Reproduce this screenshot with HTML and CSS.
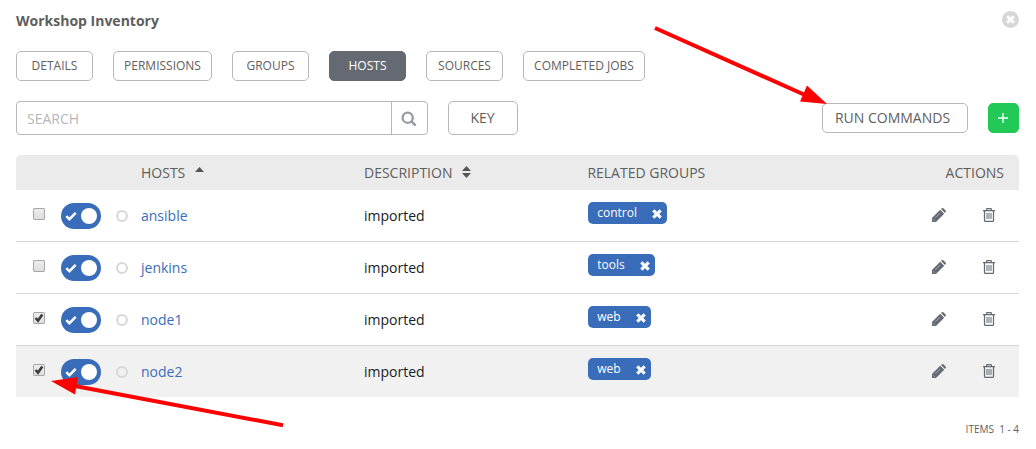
FILE: index.html
```html
<!DOCTYPE html>
<html lang="en">
<head>
<meta charset="utf-8">
<title>Workshop Inventory</title>
<link rel="stylesheet" href="styles.css">
</head>
<body>
<svg class="defs" aria-hidden="true">
  <symbol id="check" viewBox="0 0 12 10"><path d="M1.3 5.2 4.4 8.2 10.7 1.8" fill="none" stroke="#fff" stroke-width="2.5"/></symbol>
  <symbol id="times" viewBox="0 0 10 10"><path d="M1.3 1.3 8.7 8.7M8.7 1.3 1.3 8.7" fill="none" stroke="#fff" stroke-width="3.1"/></symbol>
  <symbol id="tick" viewBox="0 0 12 12"><path d="M2.6 6 5 8.7 9.3 2.5" fill="none" stroke="#3c3c3c" stroke-width="2.6"/></symbol>
  <symbol id="pencil" viewBox="0 0 14 14"><path d="M0 14V10L8.2 1.8 12.2 5.8 4 14ZM9 1 10 .3Q10.8-.3 11.6.4L13.6 2.4Q14.3 3.2 13.6 4L13 5Z" fill="#646972"/><path d="M1.2 11.2 2.8 12.8M3.2 10 8.2 5" fill="none" stroke="#fff" stroke-opacity=".5" stroke-width=".8"/></symbol>
  <symbol id="trash" viewBox="0 0 12 14"><path d="M0 2.5H12M3.5 2.5V1.5Q3.5.6 4.5.6H7.5Q8.5.6 8.5 1.5V2.5M1.5 3V12.4Q1.5 13.4 2.5 13.4H9.5Q10.5 13.4 10.5 12.4V3" fill="none" stroke="#646972" stroke-width="1.25"/><path d="M4 5V11M6 5V11M8 5V11" stroke="#646972" stroke-width="1"/></symbol>
</svg>
<main class="panel">
  <header class="title-bar">
    <h1 class="title">Workshop Inventory</h1>
    <span class="close"><svg width="9" height="9"><use href="#times"/></svg></span>
  </header>
  <nav class="tabs">
    <button class="btn tab">DETAILS</button>
    <button class="btn tab tab-permissions">PERMISSIONS</button>
    <button class="btn tab">GROUPS</button>
    <button class="btn tab active">HOSTS</button>
    <button class="btn tab">SOURCES</button>
    <button class="btn tab tab-jobs">COMPLETED JOBS</button>
  </nav>
  <div class="toolbar">
    <div class="search">
      <input class="search-input" placeholder="SEARCH">
      <span class="search-icon"><svg width="16" height="16" viewBox="0 0 16 16"><circle cx="6.7" cy="6.7" r="5.1" fill="none" stroke="#959aa3" stroke-width="2.3"/><path d="M10.4 10.4 14.6 14.6" stroke="#959aa3" stroke-width="2.6"/></svg></span>
    </div>
    <button class="btn key">KEY</button>
    <button class="btn run">RUN COMMANDS</button>
    <button class="btn add"><svg width="10" height="10"><path d="M5 0V10M0 5H10" stroke="#fff" stroke-width="1.3"/></svg></button>
  </div>
  <section class="table">
    <div class="row head">
      <span class="head-hosts">HOSTS<svg class="sort-up" width="9" height="5"><path d="M0 5 4.5 0 9 5Z" fill="#555"/></svg></span>
      <span class="head-desc">DESCRIPTION<svg class="sort" width="9" height="12"><path d="M0 5 4.5 0 9 5ZM0 7H9L4.5 12Z" fill="#555"/></svg></span>
      <span>RELATED GROUPS</span>
      <span class="head-actions">ACTIONS</span>
    </div>
    <div class="row">
      <span class="box"></span><span class="toggle"><svg width="12" height="10"><use href="#check"/></svg><i class="knob"></i></span><span class="status"></span>
      <a class="host">ansible</a><span class="desc">imported</span>
      <span class="tag">control<svg width="10" height="10"><use href="#times"/></svg></span>
      <span class="actions"><svg width="14" height="14"><use href="#pencil"/></svg><svg width="12" height="14"><use href="#trash"/></svg></span>
    </div>
    <div class="row">
      <span class="box"></span><span class="toggle"><svg width="12" height="10"><use href="#check"/></svg><i class="knob"></i></span><span class="status"></span>
      <a class="host">jenkins</a><span class="desc">imported</span>
      <span class="tag">tools<svg width="10" height="10"><use href="#times"/></svg></span>
      <span class="actions"><svg width="14" height="14"><use href="#pencil"/></svg><svg width="12" height="14"><use href="#trash"/></svg></span>
    </div>
    <div class="row">
      <span class="box"><svg width="12" height="12"><use href="#tick"/></svg></span><span class="toggle"><svg width="12" height="10"><use href="#check"/></svg><i class="knob"></i></span><span class="status"></span>
      <a class="host">node1</a><span class="desc">imported</span>
      <span class="tag">web<svg width="10" height="10"><use href="#times"/></svg></span>
      <span class="actions"><svg width="14" height="14"><use href="#pencil"/></svg><svg width="12" height="14"><use href="#trash"/></svg></span>
    </div>
    <div class="row hovered">
      <span class="box"><svg width="12" height="12"><use href="#tick"/></svg></span><span class="toggle"><svg width="12" height="10"><use href="#check"/></svg><i class="knob"></i></span><span class="status"></span>
      <a class="host">node2</a><span class="desc">imported</span>
      <span class="tag">web<svg width="10" height="10"><use href="#times"/></svg></span>
      <span class="actions"><svg width="14" height="14"><use href="#pencil"/></svg><svg width="12" height="14"><use href="#trash"/></svg></span>
    </div>
  </section>
  <footer class="pager">ITEMS&nbsp; 1 - 4</footer>
</main>
<svg class="arrows" width="1036" height="449" viewBox="0 0 1036 449">
  <path d="M655 28 805 95M283 425.3 75 386" stroke="#f00" stroke-width="4" fill="none"/>
  <path d="M827 104 807 85.5 800 101.5ZM51 381 78 377 75 394.5Z" fill="#f00"/>
</svg>
</body>
</html>
```
FILE: styles.css
```css
* { box-sizing: border-box; }
body {
  margin: 0;
  height: 449px;
  overflow: hidden;
  background: #fff;
  color: #161b1f;
  font: 14px/20px "Open Sans", sans-serif;
}
svg { display: block; flex: none; }
.defs { display: none; }
.panel { padding: 11px 17px 0 16px; }
.title-bar { display: flex; justify-content: space-between; height: 40px; }
.title { margin: 0; font-size: 14px; line-height: 20px; font-weight: 700; color: #5e5e5e; }
.close {
  display: flex; align-items: center; justify-content: center;
  width: 17px; height: 17px; border-radius: 50%; background: #d7d7d7;
}
.btn {
  display: flex; align-items: center; justify-content: center;
  height: 30px; padding: 0; border: 1px solid #b7b7b7; border-radius: 5px;
  background: #fff; color: #5e5e5e;
  font: 14px/20px "Open Sans", sans-serif;
}
.tabs { display: flex; gap: 20px; }
.tab { width: 77px; padding-bottom: 1px; font-size: 12px; }
.tab-permissions { width: 99px; }
.tab-jobs { width: 122px; }
.active { background: #646972; border-color: #646972; color: #fff; }
.toolbar { display: flex; align-items: center; gap: 20px; height: 34px; margin-top: 20px; }
.search { display: flex; width: 412px; height: 34px; border: 1px solid #b7b7b7; border-radius: 4px; }
.search-input {
  flex: 1; min-width: 0; padding: 2px 10px 0; border: 0; background: none;
  font: 14px/20px "Open Sans", sans-serif;
}
.search-input::placeholder { color: #b7b7b7; opacity: 1; }
.search-icon { display: flex; align-items: center; justify-content: center; width: 36px; padding: 1px 2px 0 0; border-left: 1px solid #b7b7b7; }
.key { width: 70px; height: 34px; padding-right: 1px; }
.run { width: 146px; margin-left: auto; padding-right: 5px; }
.add { width: 31px; padding-right: 1px; background: #22c956; border-color: #22c956; }
.table { margin-top: 20px; }
.row {
  display: grid;
  grid-template-columns: 28px 55px 25px 223px 223.6px 1fr 80px;
  align-items: center;
  height: 52px; padding: 0 24px 0 17px;
  border-bottom: 1px solid #d7d7d7;
}
.head {
  grid-template-columns: 223px 223.4px 1fr 80px;
  height: 35px; padding: 0 15px 0 125px; border: 0; border-radius: 5px 5px 0 0;
  background: #ebebeb; color: #5e5e5e;
}
.head-hosts, .head-desc { display: flex; align-items: center; gap: 10px; }
.sort-up { margin-bottom: 7px; }
.sort { margin-bottom: 1px; }
.head-actions { text-align: right; }
.hovered { height: 51px; border: 0; background: #f1f1f1; }
.box {
  width: 12px; height: 12px; margin-bottom: 3px;
  border-radius: 2px; background: linear-gradient(#eee, #ddd);
  box-shadow: inset 0 0 0 1px #a6a6a6;
}
.toggle {
  display: flex; align-items: center; justify-content: space-between;
  width: 40px; height: 26px; padding: 0 4px; border-radius: 13px; background: #396dba;
}
.knob { width: 16px; height: 16px; border-radius: 50%; background: #fff; }
.status { width: 12px; height: 12px; border: 2px solid #d7d7d7; border-radius: 50%; }
.host { color: #396dba; }
.tag {
  display: flex; align-items: center; gap: 15px; justify-self: start;
  height: 22px; margin-bottom: 5px; padding: 0 5px 1px 9.6px;
  border-radius: 5px; background: #396dba; color: #fff; font-size: 12px;
}
.tag svg { margin-top: 3px; }
.actions { display: flex; justify-content: flex-end; gap: 37px; margin-bottom: 1px; }
.pager { margin-top: 22px; text-align: right; font-size: 10px; color: #5e5e5e; }
/* Annotation arrows lie over the whole page. */
.arrows { position: absolute; top: 0; left: 0; pointer-events: none; }
```
